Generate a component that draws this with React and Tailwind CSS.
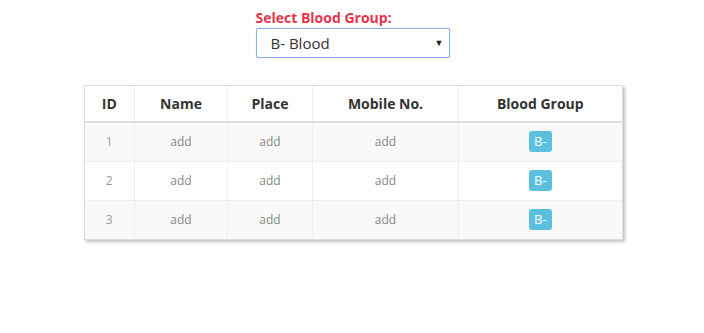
import React from 'react';

const rows = [
  { id: 1, name: 'add', place: 'add', mobile: 'add', group: 'B-' },
  { id: 2, name: 'add', place: 'add', mobile: 'add', group: 'B-' },
  { id: 3, name: 'add', place: 'add', mobile: 'add', group: 'B-' },
];

function App() {
  return (
    <div className="min-h-screen bg-white text-[#333] font-['Open_Sans',sans-serif]">
      <div className="flex flex-col items-center pt-[8px]">
        <div className="w-[195px] pl-[1px]">
          <label className="block text-[14px] font-bold leading-[20px] text-[#e8334a]">Select Blood Group:</label>
          <div className="relative">
            <select
              defaultValue="B-"
              className="h-[30px] w-full appearance-none rounded-[2px] border border-[#86aef0] bg-white pl-[14px] text-[15px] text-[#333] shadow-[0_0_1px_rgba(102,153,230,0.6)] outline-none"
            >
              <option value="B-">B- Blood</option>
            </select>
            <span className="pointer-events-none absolute right-[6px] top-[8px] text-[9px] text-[#222]">▼</span>
          </div>
        </div>
      </div>

      <div className="mx-auto mt-[27px] w-[539px] translate-x-[1px] border border-[#ddd] shadow-[2px_2px_3px_rgba(0,0,0,0.25)]">
        <table className="w-full border-collapse text-center">
          <thead>
            <tr className="h-[36px] border-b-2 border-[#ddd] text-[14px] font-bold text-[#333]">
              <th className="w-[50px] border-r border-[#eee]">ID</th>
              <th className="w-[93px] border-r border-[#eee]">Name</th>
              <th className="w-[85px] border-r border-[#eee]">Place</th>
              <th className="w-[146px] border-r border-[#eee]">Mobile No.</th>
              <th>Blood Group</th>
            </tr>
          </thead>
          <tbody className="text-[12px] text-[#888]">
            {rows.map((r, i) => (
              <tr key={r.id} className={`h-[39px] ${i < 2 ? 'border-b border-[#eee]' : ''} ${i % 2 === 0 ? 'bg-[#f9f9f9]' : 'bg-white'}`}>
                <td className="border-r border-[#eee] text-[#999]">{r.id}</td>
                <td className="border-r border-[#eee]">{r.name}</td>
                <td className="border-r border-[#eee]">{r.place}</td>
                <td className="border-r border-[#eee]">{r.mobile}</td>
                <td>
                  <span className="inline-flex h-[21px] w-[23px] items-center justify-center rounded-[3px] bg-[#5bc0de] align-middle text-[13px] text-white">
                    {r.group}
                  </span>
                </td>
              </tr>
            ))}
          </tbody>
        </table>
      </div>
    </div>
  );
}

export default App;
